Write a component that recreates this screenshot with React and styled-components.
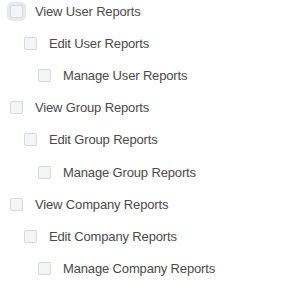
import React from 'react'
import styled, { createGlobalStyle } from 'styled-components'

const GlobalStyle = createGlobalStyle`
    body {
        margin: 0;
        background: #ffffff;
        font-family: "Liberation Sans", Arial, sans-serif;
    }
`

const groups = ['User', 'Group', 'Company']
const levels = ['View', 'Edit', 'Manage']

const App = () => {
    return (
        <>
            <GlobalStyle />
            <StList>
                {groups.map((group, gi) =>
                    levels.map((level, li) => (
                        <StRow key={group + level} $depth={li}>
                            <StBox type="checkbox" $focused={gi === 0 && li === 0} />
                            <StLabel>{level} {group} Reports</StLabel>
                        </StRow>
                    ))
                )}
            </StList>
        </>
    )
}

export default App

const StList = styled.div`
    display: flex;
    flex-direction: column;
    padding: 0 0 0 10px;
`

const StRow = styled.label`
    display: flex;
    align-items: center;
    height: 32.2px;
    margin-top: -5px;
    margin-bottom: 5px;
    padding-left: ${props => props.$depth * 14}px;
    gap: 12px;
`

const StBox = styled.input`
    appearance: none;
    margin: 0;
    width: 11px;
    height: 11px;
    border: 1px solid #d6d9dd;
    border-radius: 2px;
    background: #f4f5f7;
    box-sizing: content-box;
    box-shadow: ${props => props.$focused ? '0 0 0 3px #e6e9ee' : 'none'};
`

const StLabel = styled.span`
    font-size: 13px;
    letter-spacing: -0.15px;
    color: #4a4a4a;
`
